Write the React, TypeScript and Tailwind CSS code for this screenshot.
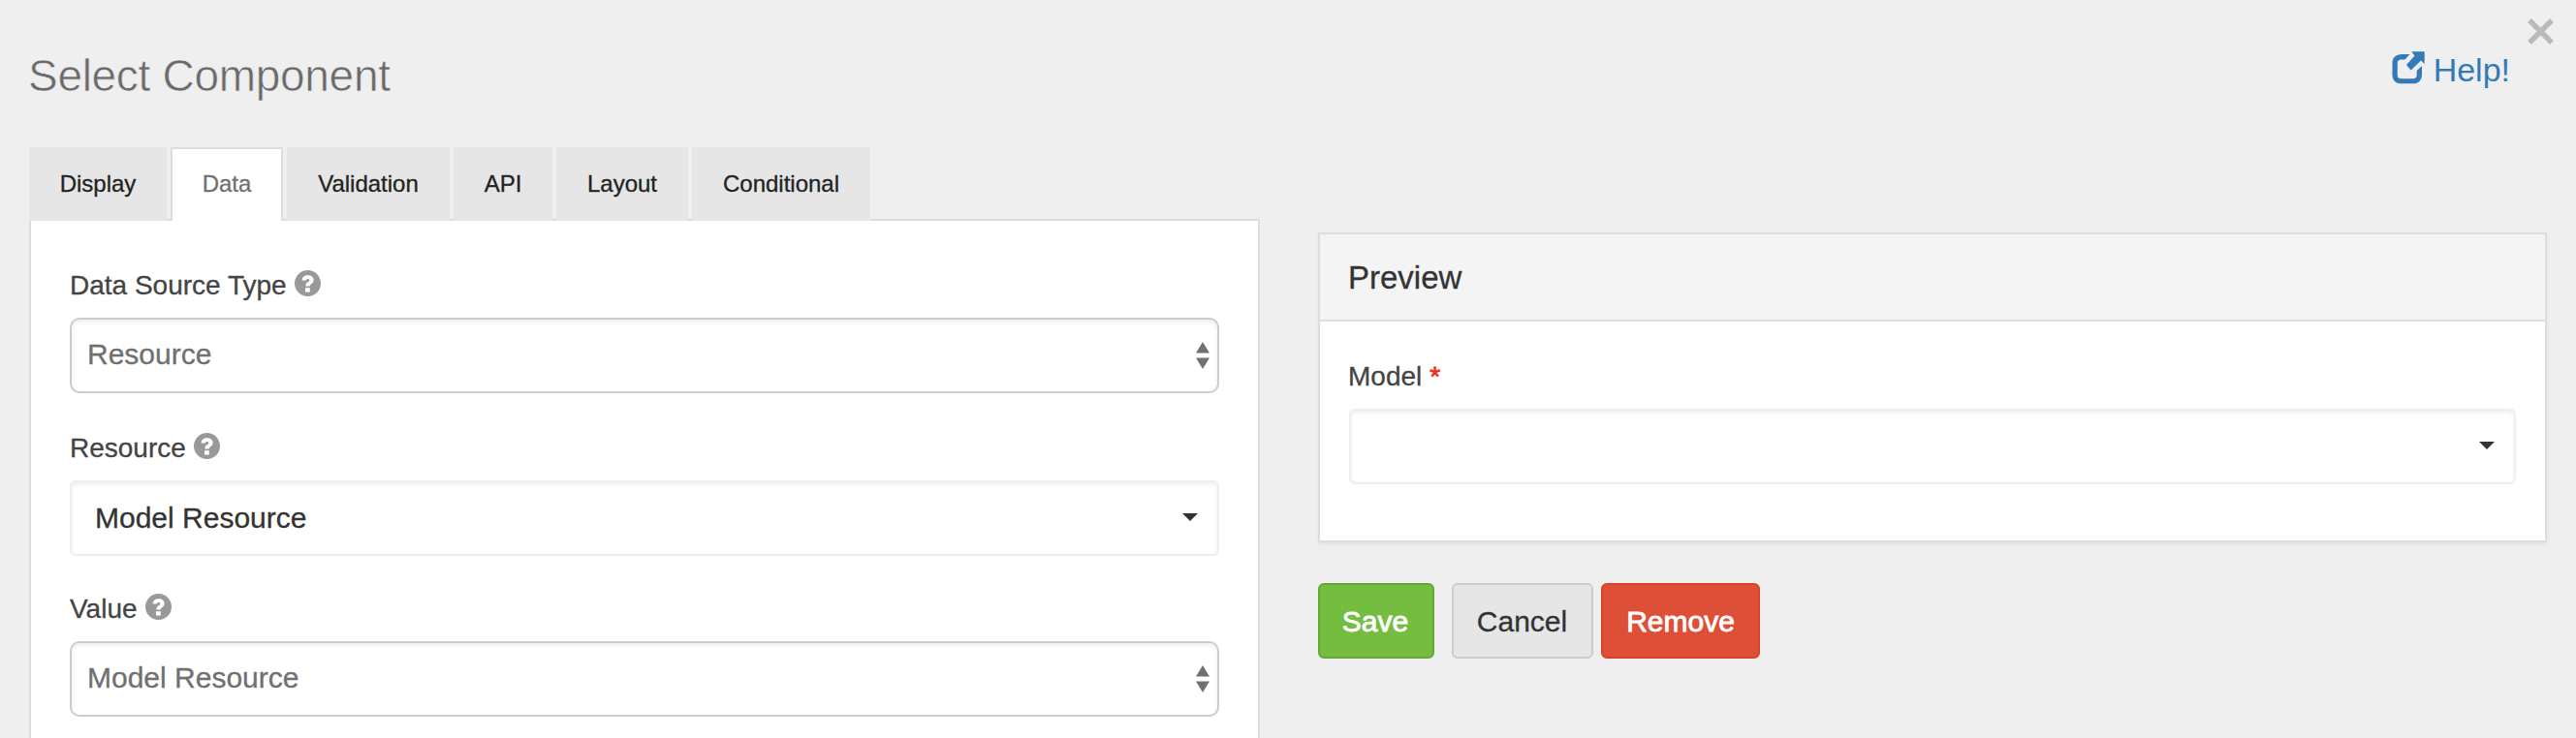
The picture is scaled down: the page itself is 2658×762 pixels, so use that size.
import React from "react";

const TABS = [
  { label: "Display", box: "w-[142px]" },
  { label: "Data", box: "w-[116px]", active: true },
  { label: "Validation", box: "w-[168px]" },
  { label: "API", box: "w-[102px]" },
  { label: "Layout", box: "w-[136px]" },
  { label: "Conditional", box: "w-[184px]" },
];

function QuestionIcon() {
  return (
    <svg className="mt-[-6px] ml-[8px] h-[27px] w-[27px]" viewBox="0 0 27 27">
      <circle cx="13.5" cy="13.5" r="13.5" fill="#999" />
      <path
        d="M7.600 10.600C7.800 7 10.200 5.200 13.600 5.200c3.600 0 6 1.800 6 4.900 0 2.600-1.500 3.700-2.700 4.500-1 .7-1.300 1-1.300 1.900h-4.200c0-2.300.8-3.200 2.200-4.200 1-.7 1.600-1.100 1.600-1.900 0-.9-.6-1.300-1.500-1.300-1.100 0-1.700.6-1.800 1.500z"
        fill="#fff"
      />
      <rect x="11" y="18.200" width="4.800" height="4.300" fill="#fff" />
    </svg>
  );
}

function Caret() {
  return (
    <svg className="mt-[-2px] h-2 w-4" viewBox="0 0 16 8">
      <path d="M0 0h16L8 8z" fill="#333" />
    </svg>
  );
}

function Label({ children }: { children: React.ReactNode }) {
  return (
    <div className="flex h-10 items-center pt-[2px] text-[28px] leading-10 text-[#444] [-webkit-text-stroke:0.3px_#444]">
      {children}
    </div>
  );
}

function NativeSelect({ value }: { value: string }) {
  return (
    <div className="flex h-[78px] items-center justify-between rounded-[10px] border-2 border-[#ccc] bg-white pr-2 pl-4 text-[30px] text-[#707070] shadow-[inset_0_2px_4px_rgba(0,0,0,0.08)]">
      <span className="mt-[-3px] leading-10 [-webkit-text-stroke:0.3px_#707070]">{value}</span>
      <svg className="h-7 w-[14px]" viewBox="0 0 14 28">
        <path d="M7 0l7 11.500H0zM0 16.500h14L7 28z" fill="#707070" />
      </svg>
    </div>
  );
}

function PickerSelect({ value }: { value?: string }) {
  return (
    <div className="flex h-[78px] items-center justify-between rounded-md border-2 border-[#eee] bg-white pr-5 pl-6 text-[30px] text-[#333] shadow-[inset_0_2px_4px_rgba(0,0,0,0.07)]">
      <span className="leading-10 [-webkit-text-stroke:0.3px_#333]">{value}</span>
      <Caret />
    </div>
  );
}

export default function App() {
  return (
    <div className="h-[762px] w-[2658px] overflow-hidden bg-[#efefef] font-['Liberation_Sans',Arial,sans-serif]">
      <header className="flex h-[152px] justify-between pr-[23px] pl-[30px]">
        <h1 className="mt-[50px] ml-[-1px] text-[46px] leading-[56px] tracking-[-0.3px] text-[#6a6a6a] [-webkit-text-stroke:0.6px_#efefef]">
          Select Component
        </h1>
        <div className="flex">
          <a className="mt-[50px] mr-[18px] flex h-11 items-start text-[34px] leading-11 text-[#337ab7]">
            <svg className="mt-[3px] mr-[9px] h-[34px] w-[34px]" viewBox="0 0 34 34">
              <path
                d="M18.500 3H10.500C4 3 .5 6.500 .5 12.500V24C.5 30 4 33.300 10 33.300H21.500C27.500 33.300 31 30 31 24V15L25.700 20V24.500C25.700 27 24.200 28.300 22 28.300H9.500C7 28.300 5.800 27 5.800 24.500V12.500C5.800 10 7 8.500 9.500 8.500H13.500z"
                fill="#337ab7"
              />
              <path d="M20.300 .3H33.700V13L30 9.500L19.700 19.500L15 14L23.500 4.500z" fill="#337ab7" />
            </svg>
            Help!
          </a>
          <svg className="mt-[19px] h-[27px] w-[27px]" viewBox="0 0 27 27">
            <path d="M2 2l23 23M25 2L2 25" stroke="#bababa" strokeWidth="5.400" />
          </svg>
        </div>
      </header>

      <main className="flex items-start pl-[30px]">
        <section className="w-[1270px]">
          <nav className="flex h-[76px] gap-1 bg-[linear-gradient(#ddd,#ddd)] bg-[length:100%_2px] bg-bottom bg-no-repeat text-[24px]">
            {TABS.map((t) => (
              <div
                key={t.label}
                className={`flex h-[76px] items-center justify-center ${t.box} ${
                  t.active
                    ? "border-2 border-b-0 border-[#ddd] bg-white pb-[2px] text-[#707070] [-webkit-text-stroke:0.3px_#707070]"
                    : "bg-[#e6e6e6] text-[#222] [-webkit-text-stroke:0.3px_#222]"
                }`}
              >
                {t.label}
              </div>
            ))}
          </nav>
          <div className="h-[534px] border-x-2 border-[#ddd] bg-white px-10 pt-[46px]">
            <Label>
              Data Source Type
              <QuestionIcon />
            </Label>
            <div className="pt-[14px] pb-[36px]">
              <NativeSelect value="Resource" />
            </div>
            <Label>
              Resource
              <QuestionIcon />
            </Label>
            <div className="pt-[14px] pb-[34px]">
              <PickerSelect value="Model Resource" />
            </div>
            <Label>
              Value
              <QuestionIcon />
            </Label>
            <div className="pt-[14px]">
              <NativeSelect value="Model Resource" />
            </div>
          </div>
        </section>

        <section className="mt-[88px] ml-[60px] w-[1268px]">
          <div className="h-[320px] border-2 border-[#ddd] bg-white shadow-[0_2px_4px_rgba(0,0,0,0.06)]">
            <div className="flex h-[90px] items-center border-b-2 border-[#ddd] bg-[#f4f4f4] pt-[2px] pl-[29px] text-[33px] text-[#333] [-webkit-text-stroke:0.3px_#333]">
              Preview
            </div>
            <div className="px-[30px] pt-[36px]">
              <Label>
                <span className="-ml-px">Model</span>
                <span className="ml-[8px] text-[#eb3323] [-webkit-text-stroke:0.8px_#eb3323]">*</span>
              </Label>
              <div className="pt-[14px]">
                <PickerSelect />
              </div>
            </div>
          </div>
          <div className="mt-[42px] flex text-[30px]">
            <button className="h-[78px] w-[120px] rounded-md border-2 border-[#67a739] bg-[#75bd41] pr-[2px] text-white [-webkit-text-stroke:0.8px_#fff]">
              Save
            </button>
            <button className="ml-[18px] h-[78px] w-[146px] rounded-md border-2 border-[#ccc] bg-[#e6e6e6] pr-px text-[#333] [-webkit-text-stroke:0.3px_#333]">
              Cancel
            </button>
            <button className="ml-2 h-[78px] w-[164px] rounded-md border-2 border-[#d9412a] bg-[#dd4f36] text-white [-webkit-text-stroke:0.8px_#fff]">
              Remove
            </button>
          </div>
        </section>
      </main>
    </div>
  );
}
